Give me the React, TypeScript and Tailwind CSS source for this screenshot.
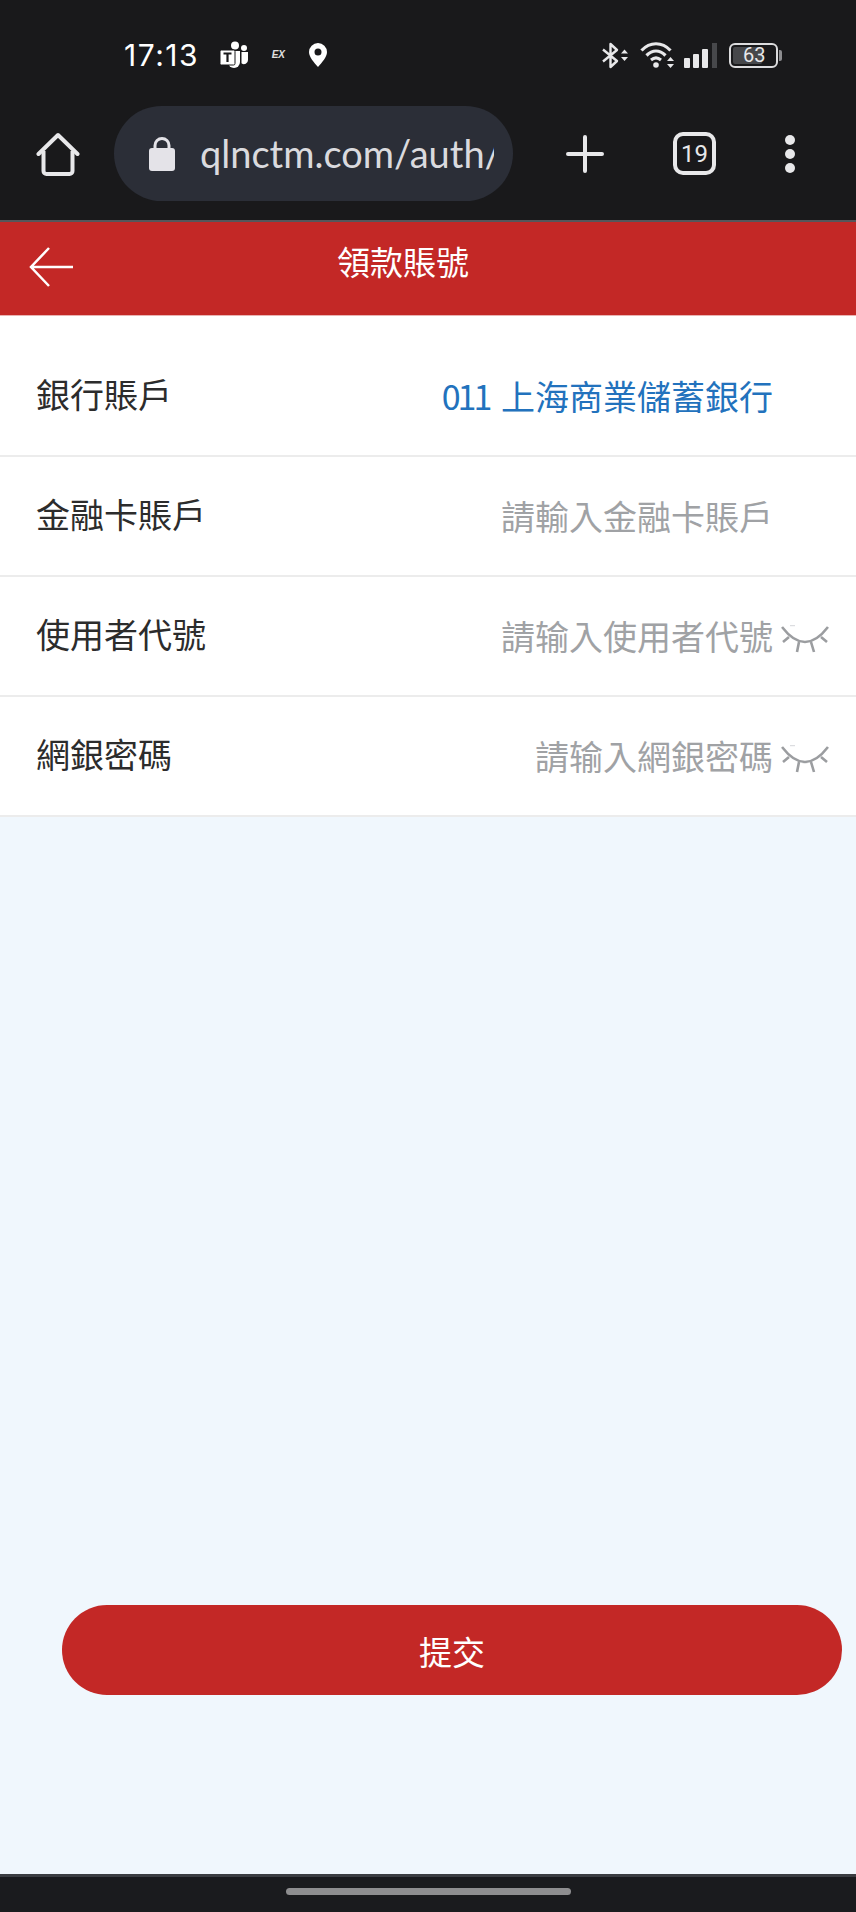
import React from "react";

const cjk = "font-['Noto_Sans_CJK_TC','Noto_Sans_CJK_SC',sans-serif]";

function Teams() {
  return (
    <svg width="30" height="28" viewBox="0 0 30 28" className="shrink-0">
      <circle cx="16" cy="4.500" r="4" fill="#fff" />
      <circle cx="25" cy="7" r="3" fill="#fff" />
      <path d="M9 10h12v11a6 6 0 0 1-12 0z" fill="#fff" />
      <path d="M22.500 11h6.500v8a4 4 0 0 1-6.500 3.200z" fill="#fff" />
      <rect x="1" y="9" width="15" height="15" rx="1.500" fill="#fff" stroke="#19191b" strokeWidth="1" />
      <path d="M4.500 12.500h8M8.500 12.500v8.500" stroke="#19191b" strokeWidth="2.200" fill="none" />
    </svg>
  );
}

function Pin() {
  return (
    <svg width="18" height="24" viewBox="0 0 18 24" className="shrink-0">
      <path fillRule="evenodd" fill="#fff" d="M9 0a9 9 0 0 1 9 9c0 5-5 10.500-9 15C5 19.500 0 14 0 9a9 9 0 0 1 9-9zm0 5.500a3.500 3.500 0 1 0 0 7 3.500 3.500 0 0 0 0-7z" />
    </svg>
  );
}

function Bluetooth() {
  return (
    <svg width="28" height="27" viewBox="0 0 28 27" className="shrink-0" fill="none">
      <path d="M2 7.500l14 11.500-6.500 6V2l6.500 6L2 19.500" stroke="#e8e8ea" strokeWidth="2.400" strokeLinejoin="round" />
      <path d="M20 11.500l3.500-4 3.500 4zM20 15l3.500 4 3.500-4z" fill="#e8e8ea" />
    </svg>
  );
}

function Wifi() {
  return (
    <svg width="36" height="27" viewBox="0 0 36 27" className="shrink-0" fill="none">
      <path d="M1.500 8.500C10 -0.500 22 -0.500 30.500 8.500" stroke="#e8e8ea" strokeWidth="3.200" />
      <path d="M6.500 13.500c6-6 13-6 19 0" stroke="#e8e8ea" strokeWidth="3.200" />
      <path d="M11 18c3.500-3 6.500-3 10 0" stroke="#e8e8ea" strokeWidth="3" />
      <circle cx="16" cy="23" r="2.800" fill="#e8e8ea" />
      <path d="M27 19l3.500-4 3.500 4zM27 22l3.500 4 3.500-4z" fill="#e8e8ea" />
    </svg>
  );
}

function Signal() {
  return (
    <svg width="33" height="25" viewBox="0 0 33 25" className="shrink-0">
      <rect x="0" y="15" width="6" height="10" rx="1" fill="#e8e8ea" />
      <rect x="9" y="11" width="6" height="14" rx="1" fill="#e8e8ea" />
      <rect x="18" y="6" width="6" height="19" rx="1" fill="#e8e8ea" />
      <rect x="28" y="0" width="5" height="25" fill="#47484b" />
    </svg>
  );
}

function Battery() {
  return (
    <div className="flex items-center shrink-0">
      <div className="w-[49px] h-[25px] rounded-[6px] border-2 border-[#dcdcde] p-[2px] flex">
        <div className="relative h-full w-[29px] bg-[#46474a] rounded-[2px] flex items-center">
          <span className="absolute left-[10px] text-[20px] leading-none text-[#e8e8ea] font-['Roboto',sans-serif]">63</span>
        </div>
      </div>
      <div className="w-[3px] h-[11px] bg-[#8d8d90] ml-[1px] rounded-r-[2px]" />
    </div>
  );
}

function Home() {
  return (
    <svg width="44" height="44" viewBox="0 0 44 44" fill="none" className="shrink-0">
      <path d="M2.500 22L22 3l19.500 19" stroke="#e8e8ea" strokeWidth="4" strokeLinejoin="round" strokeLinecap="round" />
      <path d="M7.500 19v20a3 3 0 0 0 3 3h23a3 3 0 0 0 3-3V19" stroke="#e8e8ea" strokeWidth="4" />
    </svg>
  );
}

function Lock() {
  return (
    <svg width="26" height="34" viewBox="0 0 26 34" fill="none" className="shrink-0">
      <path d="M6 13V8.500a7 7 0 0 1 14 0V13" stroke="#e4e3e8" strokeWidth="3" />
      <rect x="0" y="11" width="26" height="23" rx="3" fill="#e4e3e8" />
    </svg>
  );
}

function Plus() {
  return (
    <svg width="38" height="38" viewBox="0 0 38 38" className="shrink-0">
      <path d="M2 19h34M19 2v34" stroke="#e8e8ea" strokeWidth="4" strokeLinecap="round" />
    </svg>
  );
}

function Dots() {
  return (
    <svg width="12" height="40" viewBox="0 0 12 40" className="shrink-0">
      <circle cx="6" cy="6" r="5" fill="#e8e8ea" />
      <circle cx="6" cy="20" r="5" fill="#e8e8ea" />
      <circle cx="6" cy="34" r="5" fill="#e8e8ea" />
    </svg>
  );
}

function Eye() {
  return (
    <svg width="48" height="30" viewBox="0 0 48 30" fill="none" className="shrink-0 mt-[8px]">
      <path d="M1 2Q24 32 47 2" stroke="#9b9da0" strokeWidth="2.600" />
      <path d="M8 12l-6 5M40 12l6 5M18 17l-2 10M30 17l3 10" stroke="#9b9da0" strokeWidth="2.600" />
      <path d="M9 0.500h5" stroke="#dcdde0" strokeWidth="1.500" />
    </svg>
  );
}

const rows = [
  { label: "銀行賬戶", num: "011", value: "上海商業儲蓄銀行", blue: true, eye: false },
  { label: "金融卡賬戶", num: "", value: "請輸入金融卡賬戶", blue: false, eye: false },
  { label: "使用者代號", num: "", value: "請输入使用者代號", blue: false, eye: true },
  { label: "網銀密碼", num: "", value: "請输入網銀密碼", blue: false, eye: true },
];

export default function App() {
  return (
    <div className={`w-[856px] h-[1912px] flex flex-col overflow-hidden bg-[#f0f7fd] ${cjk}`}>
      <div className="bg-[#19191b] border-b-2 border-[#55565a] shrink-0">
        <div className="h-[106px] flex items-start pt-[41px] pl-[124px]">
          <div className="h-[28px] flex items-center w-full">
            <span className="text-[30px] leading-none text-white font-['Inter',sans-serif] w-[74px] tracking-[1.5px] whitespace-nowrap">17:13</span>
            <div className="ml-[21px]"><Teams /></div>
            <span className="ml-[16px] w-[20px] text-[10px] leading-none font-bold italic text-[#e0e0e0] font-['Liberation_Sans',sans-serif] text-right">EX</span>
            <div className="ml-[24px]"><Pin /></div>
            <div className="ml-[274px] flex items-center">
              <Bluetooth />
              <div className="ml-[11px]"><Wifi /></div>
              <div className="ml-[8px]"><Signal /></div>
              <div className="ml-[12px]"><Battery /></div>
            </div>
          </div>
        </div>
        <div className="h-[114px] pb-[19px] flex items-center">
          <div className="ml-[36px]"><Home /></div>
          <div className="ml-[34px] w-[399px] h-[95px] rounded-full bg-[#2b2e37] flex items-center pl-[35px] pr-[19px]">
            <Lock />
            <div className="ml-[25px] flex-1 overflow-hidden">
              <span className="block text-[38px] leading-[1.4] text-[#dadade] font-['Lato',sans-serif] whitespace-nowrap">qlnctm.com/auth/</span>
            </div>
          </div>
          <div className="ml-[53px]"><Plus /></div>
          <div className="ml-[69px] w-[43px] h-[43px] rounded-[10px] border-[4px] border-[#e8e8ea] flex items-center justify-center text-[24px] leading-none text-[#e8e8ea] font-['Roboto',sans-serif]">19</div>
          <div className="ml-[68px]"><Dots /></div>
        </div>
      </div>

      <div className="h-[94px] bg-[#c32826] border-b border-[#e9b3b2] flex items-center relative shrink-0">
        <svg width="44" height="40" viewBox="0 0 44 40" fill="none" className="ml-[29px] -mt-[3px] shrink-0">
          <path d="M44 20H2M20 1L2 20l18 19" stroke="#fff" strokeWidth="2.500" />
        </svg>
        <span className="absolute left-0 w-[806px] text-center text-[33px] leading-none text-white -mt-[14px]">領款賬號</span>
      </div>

      <div className="bg-white pt-[21px] shrink-0">
        {rows.map((r) => (
          <div key={r.label} className="h-[120px] border-b-2 border-[#ececec] flex items-center justify-between pl-[36px] pr-[27px]">
            <span className="text-[34px] leading-none text-[#2c2c2c] -mt-[4px]">{r.label}</span>
            <div className="flex items-center">
              <span className={r.blue ? "text-[34px] leading-none text-[#2272bd]" : "text-[34px] leading-none text-[#a0a2a5]"}>
                {r.num ? <span className="tracking-[-3px] mr-[4px]">{r.num}</span> : null}
                {r.num ? " " : null}
                {r.value}
              </span>
              <div className="ml-[8px] w-[48px] flex justify-center">{r.eye ? <Eye /> : null}</div>
            </div>
          </div>
        ))}
      </div>

      <div className="flex-1 flex flex-col">
        <button className="mt-auto mb-[179px] ml-[62px] mr-[14px] h-[90px] rounded-full bg-[#c32826] text-white text-[33px] leading-none flex items-center justify-center pt-[2px]">
          提交
        </button>
      </div>

      <div className="h-[38px] bg-[#1a1b1e] border-t-[3px] border-[#3b3d42] flex items-start justify-center pt-[11px] shrink-0">
        <div className="w-[285px] h-[7px] rounded-full bg-[#8e8e90]" />
      </div>
    </div>
  );
}
